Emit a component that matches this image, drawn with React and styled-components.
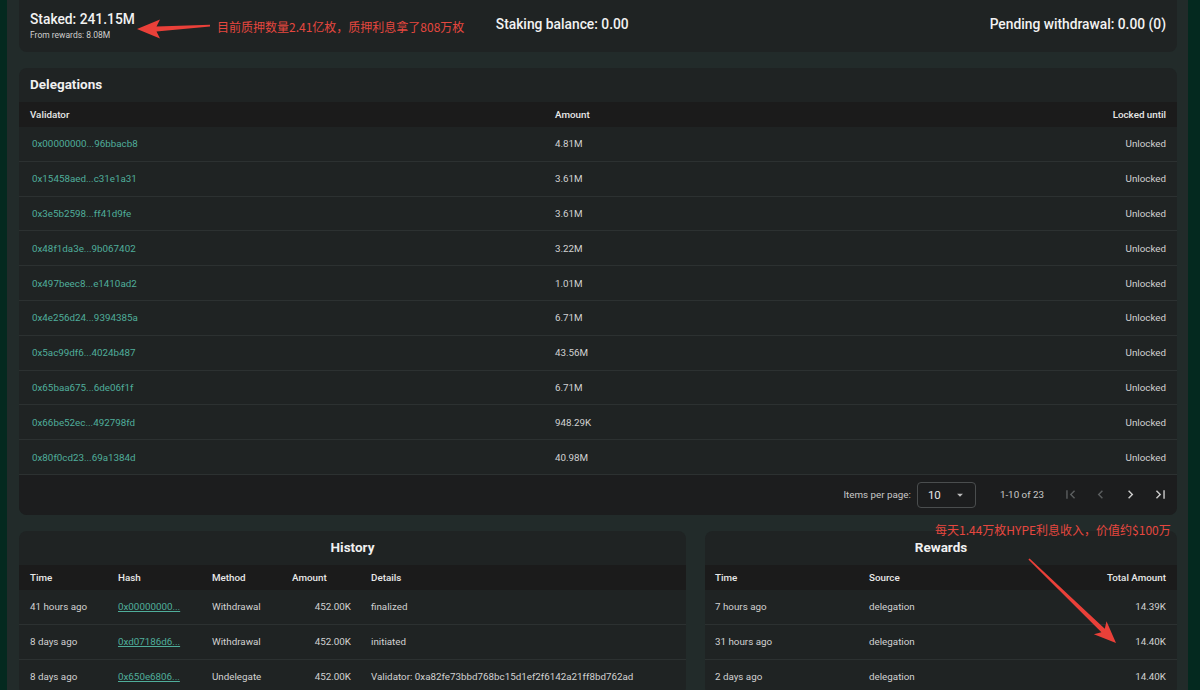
import styled, { createGlobalStyle } from "styled-components";

const GlobalStyle = createGlobalStyle`
  html, body {
    margin: 0;
    padding: 0;
    background: #062821;
    overflow: hidden;
  }
  body {
    font-family: Roboto, "Liberation Sans", "Noto Sans CJK SC", sans-serif;
    color: #e6e6e6;
  }
`

const Page = styled.div`
  position: relative;
  display: flex;
  width: 1200px;
  height: 690px;
  overflow: hidden;
  background: #062821;
`

const Strip = styled.div`
  flex: 0 0 ${(p) => p.w}px;
  background: #04291f;
`

const Main = styled.div`
  flex: 1;
  display: flex;
  flex-direction: column;
  gap: 16px;
  padding: 0 11px 0 12px;
  background: #222b2a;
  & > * {
    flex-shrink: 0;
  }
`

const Card = styled.div`
  background: #1f2323;
  border-radius: 8px;
  overflow: hidden;
`

const TopCard = styled(Card)`
  height: 52px;
  border-radius: 0 0 8px 8px;
  display: flex;
  justify-content: space-between;
  align-items: center;
  padding: 0 11px 4px;
  box-sizing: border-box;
`

const Stat = styled.div`
  font-size: 13.8px;
  font-weight: 500;
  color: #f2f2f2;
  line-height: 18px;
`

const SubStat = styled.div`
  font-size: 8.5px;
  color: #cfcfcf;
  line-height: 12px;
  margin-top: 1px;
`

const StatBlock = styled.div`
  display: flex;
  flex-direction: column;
  margin-top: 3px;
`

const CardTitle = styled.div`
  font-size: 13.5px;
  font-weight: 700;
  color: #f0f0f0;
  height: 34px;
  line-height: 32px;
  padding: 0 11px;
  text-align: ${(p) => (p.center ? "center" : "left")};
`

const HeadRow = styled.div`
  display: grid;
  grid-template-columns: ${(p) => p.cols};
  align-items: center;
  height: 25px;
  padding: 0 11px 0 ${(p) => p.pl || 11}px;
  background: #1b1b1b;
  font-size: 9.8px;
  font-weight: 500;
  color: #e8e8e8;
`

const Row = styled.div`
  display: grid;
  grid-template-columns: ${(p) => p.cols};
  align-items: center;
  height: ${(p) => p.h}px;
  padding: 0 11px 0 ${(p) => p.pl || 11}px;
  border-bottom: 1px solid #2c3131;
  box-sizing: border-box;
  font-size: 9.8px;
  color: #d2d2d2;
`

const Cell = styled.div`
  text-align: ${(p) => p.align || "left"};
  padding-right: ${(p) => p.pr || 0}px;
  white-space: nowrap;
`

const Link = styled.span`
  color: #4fae9b;
  padding-left: ${(p) => p.pad || 0}px;
  text-decoration: ${(p) => (p.underline ? "underline" : "none")};
`

const Pager = styled.div`
  height: 40px;
  display: flex;
  align-items: center;
  justify-content: flex-end;
  padding-right: 8px;
  background: #1c1d1e;
  font-size: 9.8px;
  color: #c8c8c8;
`

const Select = styled.div`
  width: 59px;
  height: 26px;
  box-sizing: border-box;
  border: 1px solid #4a4d4e;
  border-radius: 4px;
  display: flex;
  align-items: center;
  justify-content: space-between;
  padding: 0 8px 0 10px;
  margin: 0 24px 0 6px;
  font-size: 11.5px;
  color: #e6e6e6;
`

const PageIcon = styled.svg`
  width: 17px;
  height: 17px;
  margin-left: 13px;
  fill: ${(p) => (p.off ? "#5a5d5e" : "#c9c9c9")};
`

const Bottom = styled.div`
  display: grid;
  grid-template-columns: 667px 1fr;
  gap: 19px;
`

const Note = styled.div`
  position: absolute;
  left: ${(p) => p.x}px;
  top: ${(p) => p.y}px;
  font-family: "Noto Sans CJK SC", "Liberation Sans", sans-serif;
  font-size: ${(p) => p.size}px;
  color: #e5473f;
  white-space: nowrap;
  line-height: 16px;
`

const Overlay = styled.svg`
  position: absolute;
  left: 0;
  top: 0;
  pointer-events: none;
`

const delegations = [
  ["0x00000000...96bbacb8", "4.81M"],
  ["0x15458aed...c31e1a31", "3.61M"],
  ["0x3e5b2598...ff41d9fe", "3.61M"],
  ["0x48f1da3e...9b067402", "3.22M"],
  ["0x497beec8...e1410ad2", "1.01M"],
  ["0x4e256d24...9394385a", "6.71M"],
  ["0x5ac99df6...4024b487", "43.56M"],
  ["0x65baa675...6de06f1f", "6.71M"],
  ["0x66be52ec...492798fd", "948.29K"],
  ["0x80f0cd23...69a1384d", "40.98M"],
];

const history = [
  ["41 hours ago", "0x00000000...", "Withdrawal", "452.00K", "finalized"],
  ["8 days ago", "0xd07186d6...", "Withdrawal", "452.00K", "initiated"],
  ["8 days ago", "0x650e6806...", "Undelegate", "452.00K", "Validator: 0xa82fe73bbd768bc15d1ef2f6142a21ff8bd762ad"],
];

const rewards = [
  ["7 hours ago", "delegation", "14.39K"],
  ["31 hours ago", "delegation", "14.40K"],
  ["2 days ago", "delegation", "14.40K"],
];

const DEL_COLS = "525px 1fr 1fr";
const HIS_COLS = "88px 94px 80px 79px 1fr";
const REW_COLS = "154px 1fr 1fr";

export default function App() {
  return (
    <Page>
      <GlobalStyle />
      <Strip w={7} />
      <Main>
        <TopCard>
          <StatBlock>
            <Stat>Staked: 241.15M</Stat>
            <SubStat>From rewards: 8.08M</SubStat>
          </StatBlock>
          <Stat>Staking balance: 0.00</Stat>
          <Stat>Pending withdrawal: 0.00 (0)</Stat>
        </TopCard>

        <Card>
          <CardTitle>Delegations</CardTitle>
          <HeadRow cols={DEL_COLS}>
            <Cell>Validator</Cell>
            <Cell>Amount</Cell>
            <Cell align="right">Locked until</Cell>
          </HeadRow>
          {delegations.map(([v, a]) => (
            <Row key={v} cols={DEL_COLS} h={34.8}>
              <Cell><Link pad={2}>{v}</Link></Cell>
              <Cell>{a}</Cell>
              <Cell align="right">Unlocked</Cell>
            </Row>
          ))}
          <Pager>
            Items per page:
            <Select>
              10
              <svg width="14" height="14" viewBox="0 0 24 24" fill="#bdbdbd"><path d="M7 10l5 5 5-5z" /></svg>
            </Select>
            1-10 of 23
            <PageIcon off viewBox="0 0 24 24" style={{ marginLeft: 18 }}><path d="M18.41 16.59L13.82 12l4.59-4.59L17 6l-6 6 6 6zM6 6h2v12H6z" /></PageIcon>
            <PageIcon off viewBox="0 0 24 24"><path d="M15.41 7.41L14 6l-6 6 6 6 1.41-1.41L10.83 12z" /></PageIcon>
            <PageIcon viewBox="0 0 24 24"><path d="M10 6L8.59 7.41 13.17 12l-4.58 4.59L10 18l6-6z" /></PageIcon>
            <PageIcon viewBox="0 0 24 24"><path d="M5.59 7.41L10.18 12l-4.59 4.59L7 18l6-6-6-6zM16 6h2v12h-2z" /></PageIcon>
          </Pager>
        </Card>

        <Bottom>
          <Card>
            <CardTitle center>History</CardTitle>
            <HeadRow cols={HIS_COLS}>
              <Cell>Time</Cell>
              <Cell>Hash</Cell>
              <Cell>Method</Cell>
              <Cell>Amount</Cell>
              <Cell>Details</Cell>
            </HeadRow>
            {history.map(([t, h, m, a, d]) => (
              <Row key={h} cols={HIS_COLS} h={35}>
                <Cell>{t}</Cell>
                <Cell><Link underline>{h}</Link></Cell>
                <Cell>{m}</Cell>
                <Cell align="right" pr={20}>{a}</Cell>
                <Cell>{d}</Cell>
              </Row>
            ))}
          </Card>
          <Card>
            <CardTitle center>Rewards</CardTitle>
            <HeadRow cols={REW_COLS} pl={10}>
              <Cell>Time</Cell>
              <Cell>Source</Cell>
              <Cell align="right">Total Amount</Cell>
            </HeadRow>
            {rewards.map(([t, s, a]) => (
              <Row key={t} cols={REW_COLS} h={35} pl={10}>
                <Cell>{t}</Cell>
                <Cell>{s}</Cell>
                <Cell align="right">{a}</Cell>
              </Row>
            ))}
          </Card>
        </Bottom>
      </Main>
      <Strip w={12} />

      <Note x={217} y={19} size={12}>目前质押数量2.41亿枚，质押利息拿了808万枚</Note>
      <Note x={935} y={522} size={12}>每天1.44万枚HYPE利息收入，价值约$100万</Note>
      <Overlay width="1200" height="690" viewBox="0 0 1200 690">
        <polygon
          fill="#ea4039"
          points="137,29 160,19.5 156.5,26.5 210,24.8 210,26.4 156.5,31.5 160,38.5"
        />
        <polygon
          fill="#ea4039"
          points="1116,643 1106.5,621.2 1104.8,628.7 1029.6,558.4 1028.4,559.6 1101.4,632.3 1093.9,634.2"
        />
      </Overlay>
    </Page>
  );
}
